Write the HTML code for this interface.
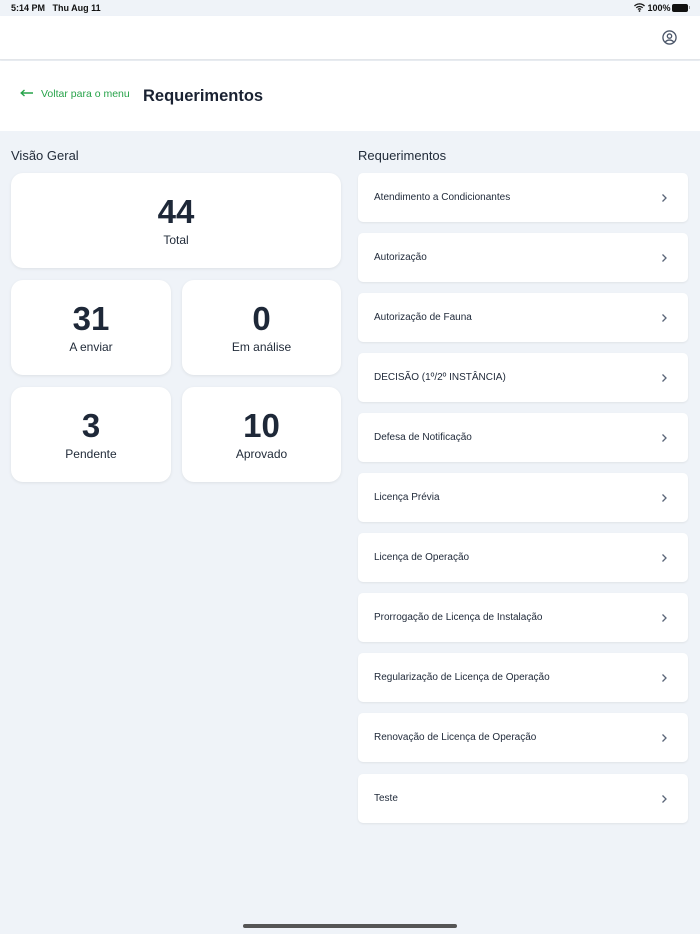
<!DOCTYPE html>
<html><head><meta charset="utf-8"><style>
*{margin:0;padding:0;box-sizing:border-box}
body{width:700px;height:934px;background:#eff3f8;font-family:"Liberation Sans",sans-serif;color:#1e2838;position:relative;overflow:hidden}
.sb{position:absolute;top:0;left:0;width:700px;height:16px;background:#eff3f8;font-size:9px;font-weight:bold;color:#111}
.hdr{position:absolute;top:16px;left:0;width:700px;height:44px;background:#fff;border-bottom:1px solid #e3e6ea;box-shadow:0 1px 2px rgba(0,0,0,.05)}
.top{position:absolute;top:61px;left:0;width:700px;height:70px;background:#fff}
.back{position:absolute;left:20px;top:88px;color:#27a34a;font-size:10.5px}
.title{position:absolute;left:143px;top:87px;font-size:16.5px;font-weight:bold;color:#1a2232}
.h{position:absolute;font-size:13px;color:#222c3a;top:148px}
.card{position:absolute;background:#fff;border-radius:12px;box-shadow:0 1px 3px rgba(0,0,0,.08);text-align:center}
.card .n{font-size:33px;font-weight:bold;color:#1e2838;margin-top:22px;line-height:34px}
.card .l{font-size:12px;color:#222c3a;margin-top:4px}
.it{position:absolute;left:358px;width:330px;height:49px;background:#fff;border-radius:5px;box-shadow:0 1px 2px rgba(0,0,0,.07);font-size:10px;color:#1e2838;padding:19px 0 0 16px}
.it svg{position:absolute;right:20px;top:20px}
</style></head><body>
<div class="sb"><span style="position:absolute;left:11px;top:3px">5:14 PM&nbsp;&nbsp; Thu Aug 11</span>
<span style="position:absolute;left:634px;top:3px">
<svg width="11" height="9" viewBox="0 0 11 9" style="vertical-align:-1px"><path d="M0.5 3a7 7 0 0 1 10 0M2.3 4.8a4.5 4.5 0 0 1 6.4 0M4 6.5a2 2 0 0 1 3 0" stroke="#111" stroke-width="1.3" fill="none"/><circle cx="5.5" cy="8" r="0.9" fill="#111"/></svg> 100%</span>
<span style="position:absolute;left:672px;top:4px;width:16px;height:8px;border-radius:2px;background:#111"></span><span style="position:absolute;left:689px;top:6px;width:1px;height:3px;background:#999"></span></div>
<div class="hdr"><svg style="position:absolute;left:662px;top:14px" width="15" height="15" viewBox="0 0 16 16" fill="none" stroke="#4a5568" stroke-width="1.4"><circle cx="8" cy="8" r="7"/><circle cx="8" cy="6.5" r="2.3"/><path d="M3.5 13a5 4 0 0 1 9 0"/></svg></div>
<div class="top"></div>
<div class="back"><svg width="14" height="8" viewBox="0 0 14 8" style="vertical-align:0;margin-right:7px"><path d="M13 4H1.5M4.5 1L1.2 4l3.3 3" stroke="#27a34a" stroke-width="1.4" fill="none"/></svg>Voltar para o menu</div>
<div class="title">Requerimentos</div>
<div class="h" style="left:11px">Visão Geral</div>
<div class="h" style="left:358px">Requerimentos</div>
<div class="card" style="left:11px;top:173px;width:330px;height:95px"><div class="n">44</div><div class="l">Total</div></div>
<div class="card" style="left:11px;top:280px;width:160px;height:95px"><div class="n">31</div><div class="l">A enviar</div></div>
<div class="card" style="left:182px;top:280px;width:159px;height:95px"><div class="n">0</div><div class="l">Em análise</div></div>
<div class="card" style="left:11px;top:387px;width:160px;height:95px"><div class="n">3</div><div class="l">Pendente</div></div>
<div class="card" style="left:182px;top:387px;width:159px;height:95px"><div class="n">10</div><div class="l">Aprovado</div></div>
<div class="it" style="top:173px">Atendimento a Condicionantes<svg width="7" height="10" viewBox="0 0 7 10"><path d="M1.5 1.5l3.5 3.5L1.5 8.5" stroke="#5a6578" stroke-width="1.3" fill="none"/></svg></div>
<div class="it" style="top:233px">Autorização<svg width="7" height="10" viewBox="0 0 7 10"><path d="M1.5 1.5l3.5 3.5L1.5 8.5" stroke="#5a6578" stroke-width="1.3" fill="none"/></svg></div>
<div class="it" style="top:293px">Autorização de Fauna<svg width="7" height="10" viewBox="0 0 7 10"><path d="M1.5 1.5l3.5 3.5L1.5 8.5" stroke="#5a6578" stroke-width="1.3" fill="none"/></svg></div>
<div class="it" style="top:353px">DECISÃO (1º/2º INSTÂNCIA)<svg width="7" height="10" viewBox="0 0 7 10"><path d="M1.5 1.5l3.5 3.5L1.5 8.5" stroke="#5a6578" stroke-width="1.3" fill="none"/></svg></div>
<div class="it" style="top:413px">Defesa de Notificação<svg width="7" height="10" viewBox="0 0 7 10"><path d="M1.5 1.5l3.5 3.5L1.5 8.5" stroke="#5a6578" stroke-width="1.3" fill="none"/></svg></div>
<div class="it" style="top:473px">Licença Prévia<svg width="7" height="10" viewBox="0 0 7 10"><path d="M1.5 1.5l3.5 3.5L1.5 8.5" stroke="#5a6578" stroke-width="1.3" fill="none"/></svg></div>
<div class="it" style="top:533px">Licença de Operação<svg width="7" height="10" viewBox="0 0 7 10"><path d="M1.5 1.5l3.5 3.5L1.5 8.5" stroke="#5a6578" stroke-width="1.3" fill="none"/></svg></div>
<div class="it" style="top:593px">Prorrogação de Licença de Instalação<svg width="7" height="10" viewBox="0 0 7 10"><path d="M1.5 1.5l3.5 3.5L1.5 8.5" stroke="#5a6578" stroke-width="1.3" fill="none"/></svg></div>
<div class="it" style="top:653px">Regularização de Licença de Operação<svg width="7" height="10" viewBox="0 0 7 10"><path d="M1.5 1.5l3.5 3.5L1.5 8.5" stroke="#5a6578" stroke-width="1.3" fill="none"/></svg></div>
<div class="it" style="top:713px">Renovação de Licença de Operação<svg width="7" height="10" viewBox="0 0 7 10"><path d="M1.5 1.5l3.5 3.5L1.5 8.5" stroke="#5a6578" stroke-width="1.3" fill="none"/></svg></div>
<div class="it" style="top:774px">Teste<svg width="7" height="10" viewBox="0 0 7 10"><path d="M1.5 1.5l3.5 3.5L1.5 8.5" stroke="#5a6578" stroke-width="1.3" fill="none"/></svg></div>
<div style="position:absolute;left:243px;top:924px;width:214px;height:4px;border-radius:2px;background:#555"></div>
</body></html>
